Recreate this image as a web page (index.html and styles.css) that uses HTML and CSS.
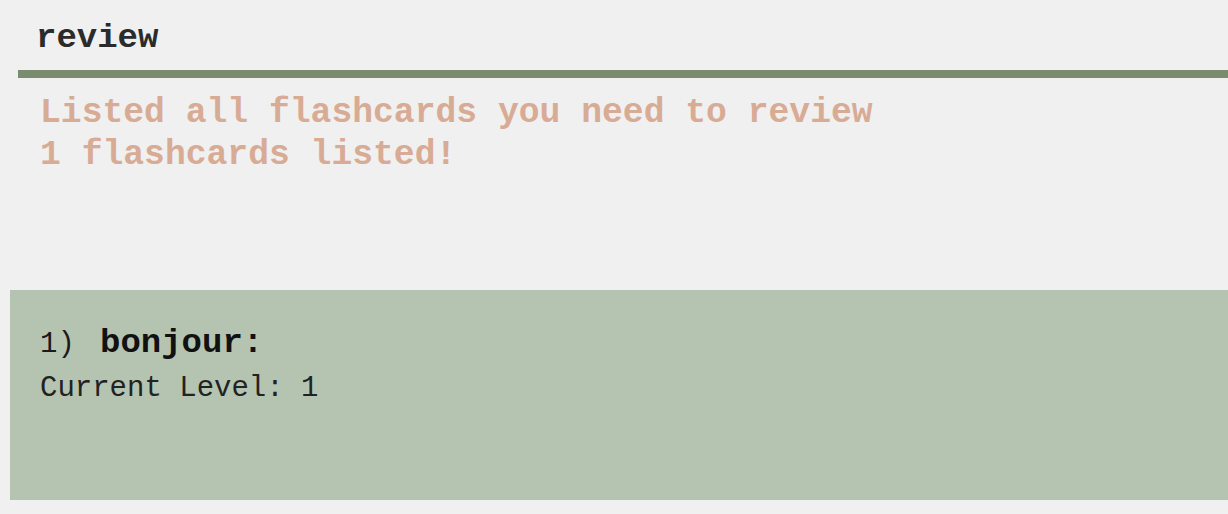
FILE: index.html
```html
<!DOCTYPE html>
<html>
<head>
<meta charset="utf-8">
<link rel="stylesheet" href="styles.css">
</head>
<body>
<div class="command">review</div>
<div class="divider"></div>
<div class="result">
  <div class="result-line">Listed all flashcards you need to review</div>
  <div class="result-line">1 flashcards listed!</div>
</div>
<div class="card">
  <div class="card-title"><span class="card-index">1)</span><span class="card-word">bonjour:</span></div>
  <div class="card-level">Current Level: 1</div>
</div>
</body>
</html>
```
FILE: styles.css
```css
html, body {
  margin: 0;
  padding: 0;
  background: #f0f0f0;
  font-family: "Courier New", "Nimbus Mono PS", "Nimbus Mono L", "FreeMono", "Liberation Mono", monospace;
  overflow: hidden;
}
.command {
  padding: 18px 0 12px 36px;
  height: 40px;
  line-height: 40px;
  font-size: 34px;
  font-weight: bold;
  color: #2b2b2b;
}
.divider {
  margin-left: 18px;
  height: 8px;
  background: #7b8b6e;
}
.result {
  padding: 14px 0 0 40px;
  height: 198px;
}
.result-line {
  font-size: 34.7px;
  line-height: 42px;
  font-weight: bold;
  color: #d8ab95;
  white-space: pre;
}
.card {
  margin-left: 10px;
  height: 210px;
  box-sizing: border-box;
  padding: 33px 0 0 30px;
  background: #b5c4b1;
  color: #1a1a1a;
}
.card-title {
  display: flex;
  align-items: baseline;
  height: 40px;
  line-height: 40px;
}
.card-index {
  font-size: 29px;
  width: 60px;
}
.card-word {
  font-size: 34px;
  font-weight: bold;
  color: #111;
}
.card-level {
  margin-top: 6px;
  font-size: 29px;
  line-height: 40px;
  color: #222;
}
```
